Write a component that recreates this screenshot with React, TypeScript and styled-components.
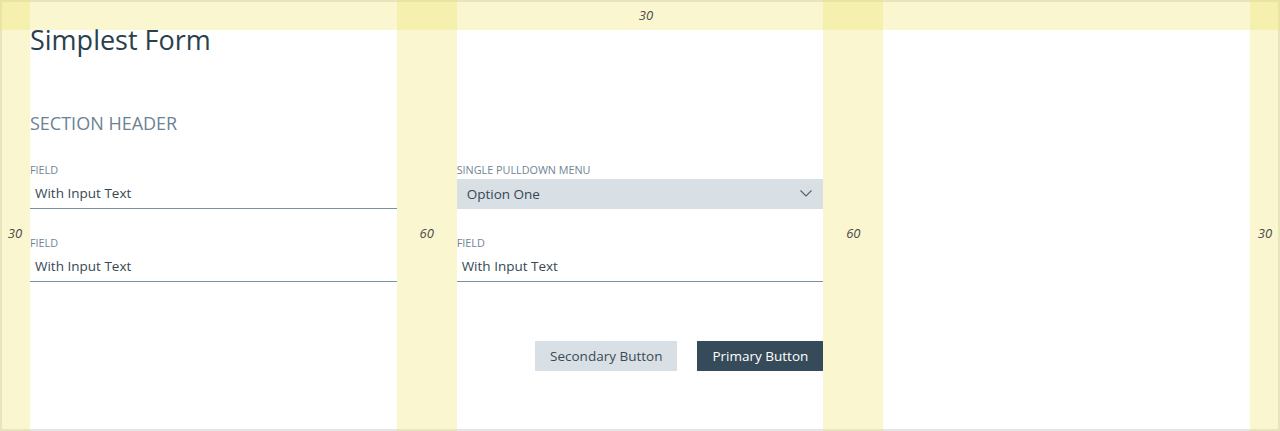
import React from "react";
import styled, { createGlobalStyle } from "styled-components";

const GlobalStyle = createGlobalStyle`
  html, body { margin: 0; padding: 0; background: #ffffff; }
  body { font-family: "Open Sans", "Noto Sans", sans-serif; }
  * { box-sizing: border-box; }
`;

const Page = styled.div`
  position: relative;
  width: 1280px;
  height: 431px;
  padding: 20px 30px 0 30px;
  overflow: hidden;
`;

const Title = styled.h1`
  margin: 0;
  font-size: 27px;
  line-height: 40px;
  font-weight: 400;
  color: #2c3f4c;
`;

const SectionHeader = styled.h2`
  margin: 51px 0 28px 0;
  font-size: 18px;
  line-height: 24px;
  font-weight: 400;
  color: #6c8292;
  text-transform: uppercase;
`;

const Columns = styled.div`
  display: grid;
  grid-template-columns: 1fr 1fr 1fr;
  column-gap: 60px;
`;

const Column = styled.div`
  display: flex;
  flex-direction: column;
  gap: 27px;
`;

const Field = styled.div`
  display: flex;
  flex-direction: column;
  gap: 2px;
`;

const Label = styled.label`
  font-size: 10.8px;
  line-height: 14px;
  color: #6f8494;
  text-transform: uppercase;
`;

const TextInput = styled.div`
  height: 30px;
  padding: 0 5px;
  border-bottom: 1px solid #7d909d;
  font-size: 13.5px;
  line-height: 28px;
  color: #364854;
`;

const Select = styled.div`
  height: 30px;
  padding: 0 11px 1px 10px;
  background: #d8dfe5;
  display: flex;
  align-items: center;
  justify-content: space-between;
  font-size: 13.5px;
  color: #364854;
`;

const ButtonRow = styled.div`
  display: flex;
  justify-content: flex-end;
  gap: 20px;
  margin-top: 32px;
`;

const Button = styled.button<{ $primary?: boolean }>`
  height: 30px;
  padding: 0 15px;
  border: none;
  border-radius: 0;
  font-family: "Open Sans", "Noto Sans", sans-serif;
  font-size: 13.5px;
  background: ${(p) => (p.$primary ? "#364b59" : "#d8dfe5")};
  color: ${(p) => (p.$primary ? "#ffffff" : "#3a4b57")};
`;

/* Layout grid overlay */
const Overlay = styled.div`
  position: absolute;
  inset: 0;
  pointer-events: none;
  box-shadow: inset 0 0 0 2px rgba(0, 0, 0, 0.1);
`;

const TopBand = styled.div`
  position: absolute;
  left: 0;
  right: 0;
  top: 0;
  height: 30px;
  background: rgba(240, 225, 100, 0.3);
  display: flex;
  align-items: center;
  justify-content: center;
  padding-left: 12px;
`;

const Strips = styled.div`
  position: absolute;
  inset: 0;
  display: flex;
`;

const Strip = styled.div<{ $w: number }>`
  width: ${(p) => p.$w}px;
  flex: none;
  background: rgba(240, 225, 100, 0.3);
  display: flex;
  align-items: center;
  justify-content: center;
  padding-top: 34px;
`;

const Spacer = styled.div`
  flex: 1;
`;

const Measure = styled.span`
  font-family: "Open Sans", "Noto Sans", sans-serif;
  font-style: italic;
  font-size: 13px;
  color: #4a4a4a;
`;

const Chevron = () => (
  <svg width="12" height="7" viewBox="0 0 12 7" fill="none">
    <path d="M0.5 0.5 L6 6 L11.5 0.5" stroke="#4f606c" strokeWidth="1.1" />
  </svg>
);

export default function App() {
  return (
    <>
      <GlobalStyle />
      <Page>
        <Title>Simplest Form</Title>
        <SectionHeader>Section Header</SectionHeader>
        <Columns>
          <Column>
            <Field>
              <Label>Field</Label>
              <TextInput>With Input Text</TextInput>
            </Field>
            <Field>
              <Label>Field</Label>
              <TextInput>With Input Text</TextInput>
            </Field>
          </Column>
          <Column>
            <Field>
              <Label>Single Pulldown Menu</Label>
              <Select>
                <span>Option One</span>
                <Chevron />
              </Select>
            </Field>
            <Field>
              <Label>Field</Label>
              <TextInput>With Input Text</TextInput>
            </Field>
            <ButtonRow>
              <Button>Secondary Button</Button>
              <Button $primary>Primary Button</Button>
            </ButtonRow>
          </Column>
          <Column />
        </Columns>
        <Overlay>
          <Strips>
            <Strip $w={30}>
              <Measure>30</Measure>
            </Strip>
            <Spacer />
            <Strip $w={60}>
              <Measure>60</Measure>
            </Strip>
            <Spacer />
            <Strip $w={60}>
              <Measure>60</Measure>
            </Strip>
            <Spacer />
            <Strip $w={30}>
              <Measure>30</Measure>
            </Strip>
          </Strips>
          <TopBand>
            <Measure>30</Measure>
          </TopBand>
        </Overlay>
      </Page>
    </>
  );
}
